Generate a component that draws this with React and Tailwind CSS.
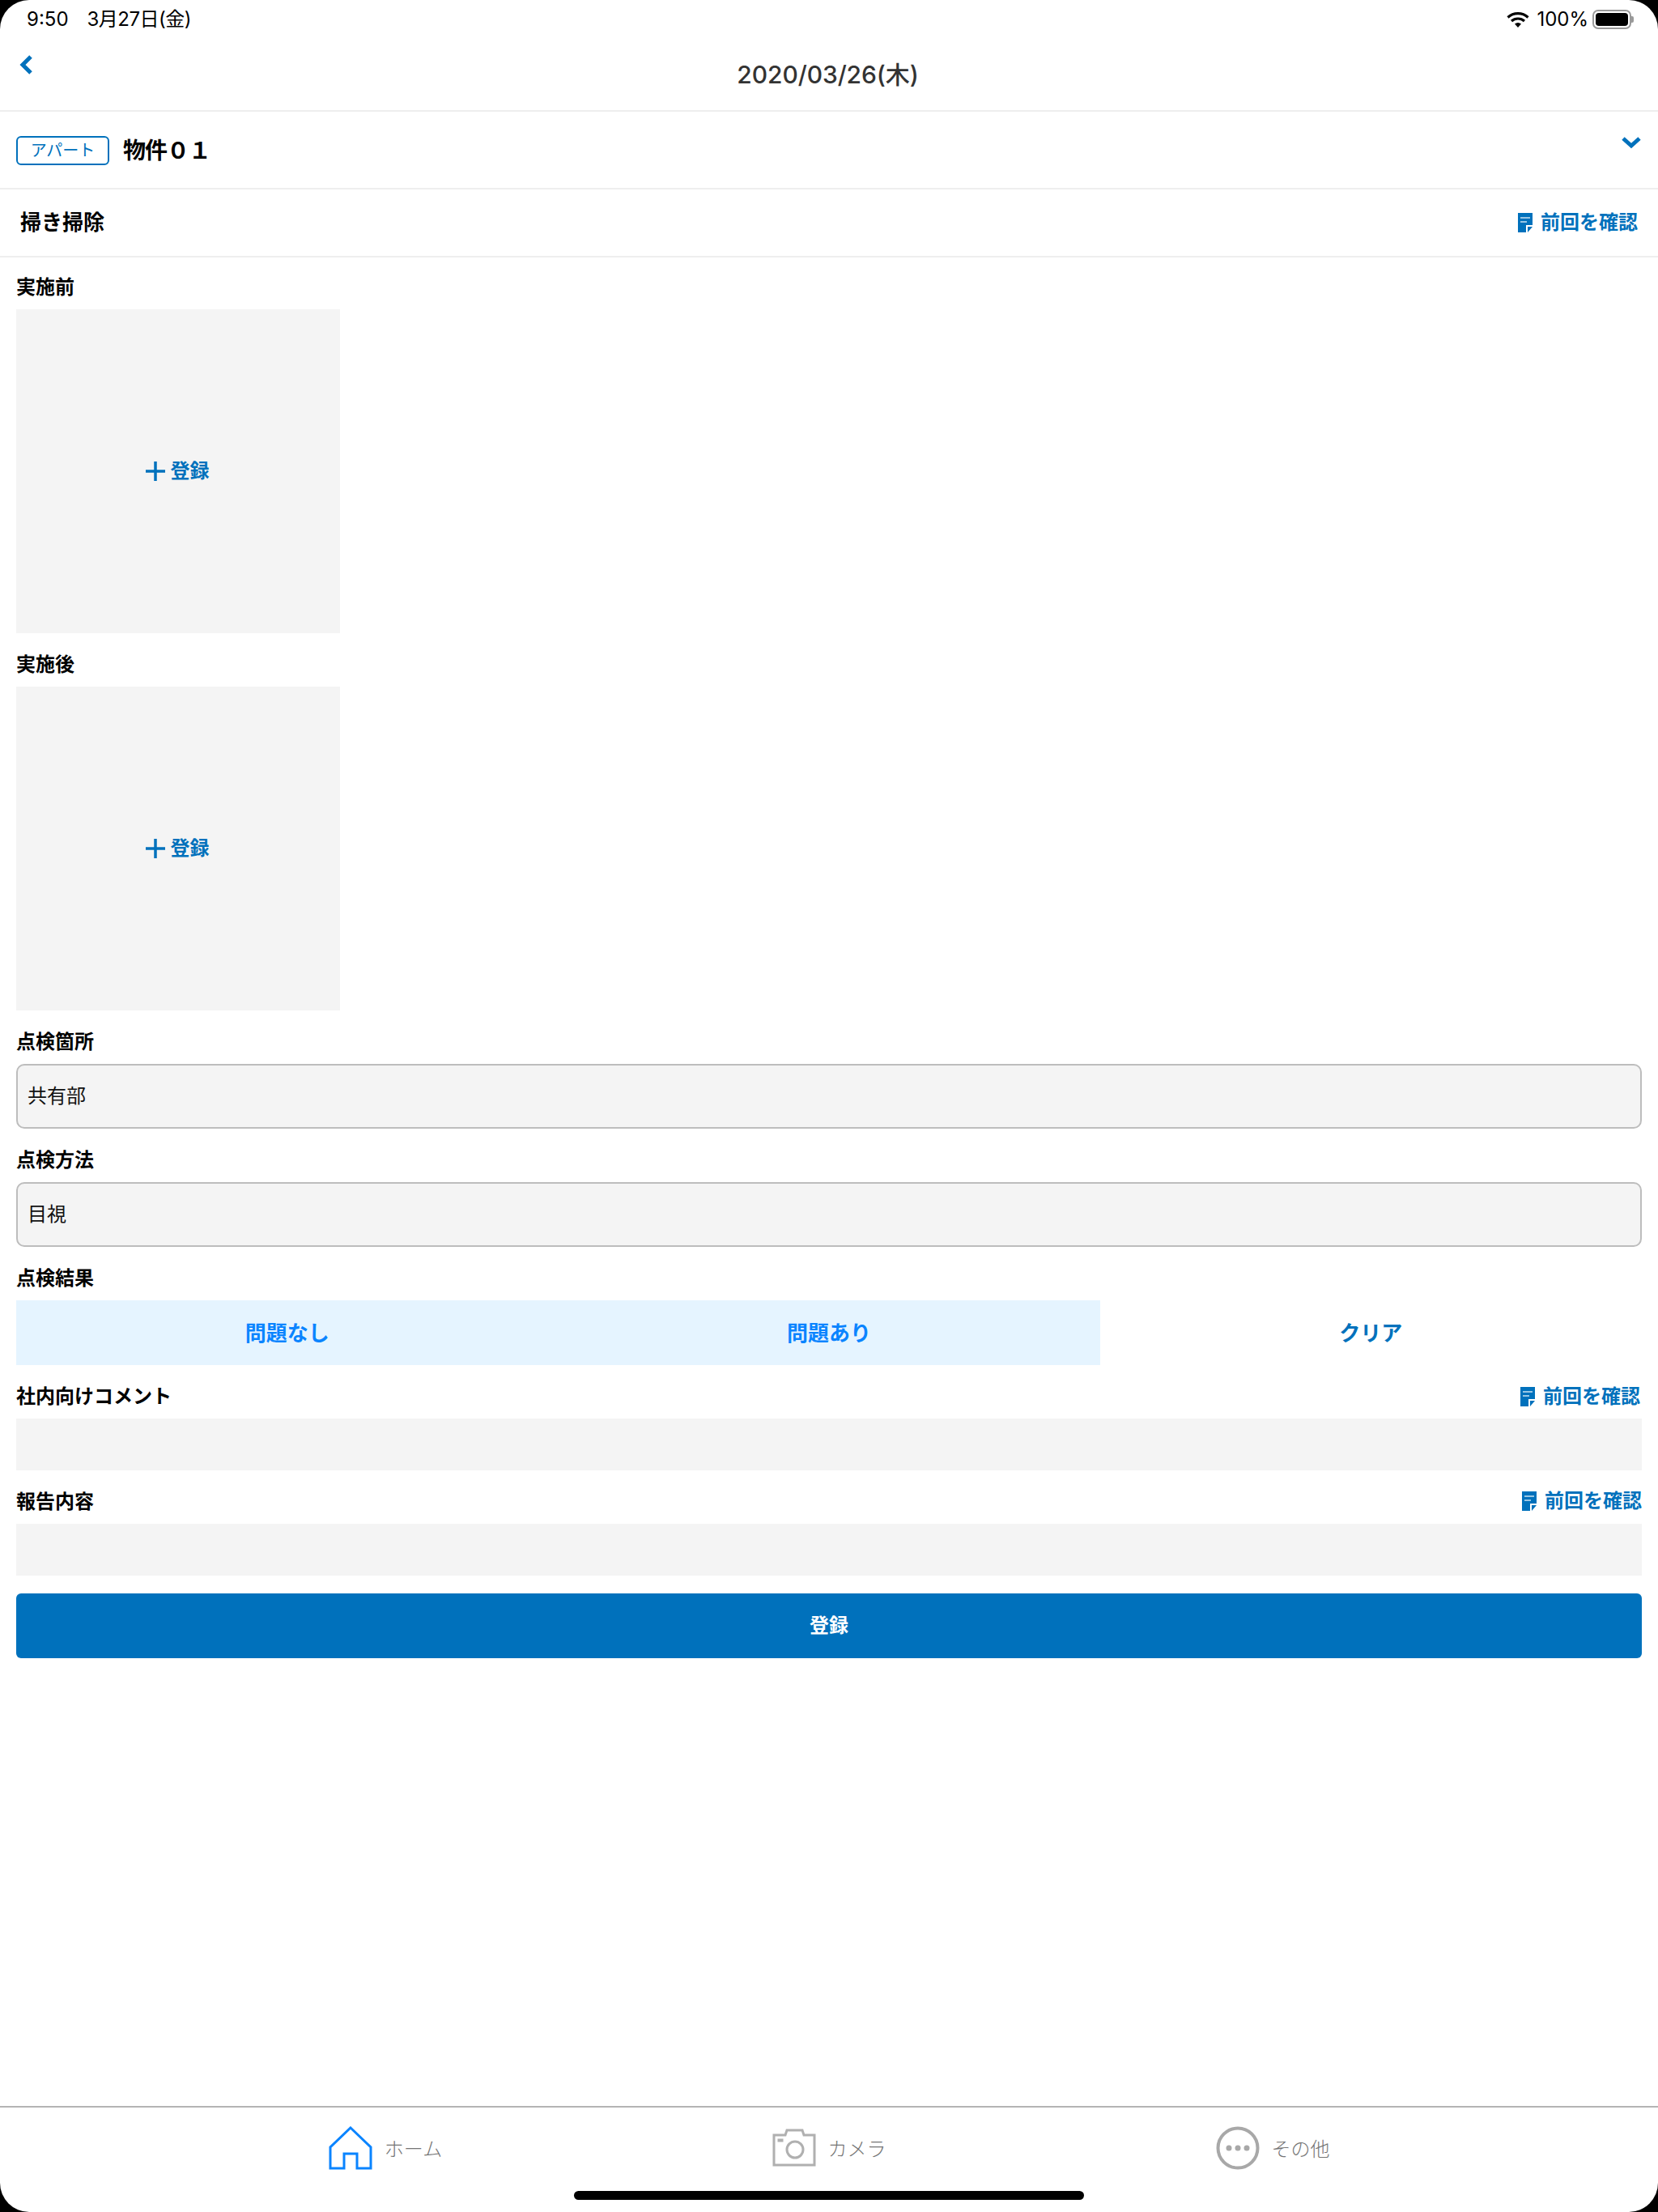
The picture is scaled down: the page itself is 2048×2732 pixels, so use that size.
import React from 'react'

const Chevron = ({ d, className }) => (
  <svg viewBox="0 0 24 24" className={className} fill="none" stroke="#0071bc" strokeWidth="5">
    <path d={d} />
  </svg>
)

const DocIcon = () => (
  <svg viewBox="0 0 18 24" className="w-[18px] h-[24px] shrink-0">
    <path d="M0 0H18V15H10V24H0Z M12 24V17H18Z" fill="#0071bc" fillRule="evenodd" />
    <path d="M3 6H15M3 11H11" stroke="#fff" strokeWidth="1.5" opacity="0.8" />
  </svg>
)

const PrevLink = ({ className = '' }) => (
  <div className={`flex items-center gap-[10px] text-[24px] leading-[28px] font-semibold text-[#0071bc] ${className}`}>
    <DocIcon />
    <span>前回を確認</span>
  </div>
)

const Field = ({ label, right, first, children }) => (
  <div className={first ? 'pt-[22px]' : 'pt-[24px]'}>
    <div className="flex justify-between items-center h-[28px] mb-[14px]">
      <span className="text-[24px] leading-[28px] pt-[1px] font-bold text-black">{label}</span>
      {right}
    </div>
    {children}
  </div>
)

const PhotoBox = () => (
  <div className="w-[400px] h-[400px] bg-[#f4f4f4] flex items-center justify-center gap-[7px] pr-[2px] text-[#0071bc]">
    <svg viewBox="0 0 24 24" className="w-[24px] h-[24px]" stroke="#0071bc" strokeWidth="3.5">
      <path d="M0 12H24M12 0V24" />
    </svg>
    <span className="text-[24px] leading-[28px] font-semibold">登録</span>
  </div>
)

const ReadOnlyInput = ({ value }) => (
  <div className="h-[80px] bg-[#f4f4f4] border-2 border-[#bdbdbd] rounded-[10px] flex items-center pl-[12px] text-[24px] text-[#111]">
    {value}
  </div>
)

const tabs = [
  {
    label: 'ホーム',
    icon: (
      <svg viewBox="0 0 54 54" className="w-[54px] h-[54px]" fill="none" stroke="#0a84ff" strokeWidth="3">
        <path d="M27 2L52 26V52H35V34H19V52H2V26Z" />
      </svg>
    ),
  },
  {
    label: 'カメラ',
    icon: (
      <svg viewBox="0 0 54 54" className="w-[54px] h-[54px]" fill="none" stroke="#b0b0b0" strokeWidth="3">
        <path d="M2 11H16L18 5H37L39 11H52V48H2Z" />
        <circle cx="28" cy="29" r="10" />
        <rect x="7" y="16" width="6" height="3" fill="#b0b0b0" strokeWidth="1" />
      </svg>
    ),
  },
  {
    label: 'その他',
    icon: (
      <svg viewBox="0 0 54 54" className="w-[54px] h-[54px]" fill="none" stroke="#a8a8a8" strokeWidth="4">
        <circle cx="27" cy="27" r="24.5" />
        <g fill="#a8a8a8" stroke="none">
          <circle cx="16" cy="27" r="3.5" />
          <circle cx="27" cy="27" r="3.5" />
          <circle cx="38" cy="27" r="3.5" />
        </g>
      </svg>
    ),
  },
]

export default function App() {
  return (
    <div className="w-[2048px] h-[2732px] bg-black font-['Inter','Noto_Sans_CJK_JP',sans-serif]">
      <div className="h-full bg-white rounded-[36px] overflow-hidden flex flex-col">
        {/* Status bar */}
        <div className="h-[48px] flex items-center justify-between pl-[33px] pr-[30px] text-[24px] text-black">
          <div className="flex items-center gap-[23px]">
            <span>9:50</span>
            <span className="tracking-[-0.5px]">3月27日(金)</span>
          </div>
          <div className="flex items-center gap-[5px]">
            <svg viewBox="0 0 28 20" className="w-[28px] h-[20px] mr-[4px]" fill="none" stroke="#000" strokeWidth="3.2">
              <path d="M1.5 7.5C8.5 1 19.5 1 26.5 7.5M6 12C10.5 8 17.5 8 22 12" />
              <path d="M10 15.5C12.5 13.5 15.5 13.5 18 15.5L14 20Z" fill="#000" stroke="none" />
            </svg>
            <span>100%</span>
            <div className="flex items-center">
              <div className="w-[48px] h-[24px] border-2 border-[#9a9a9a] rounded-[7px] p-[2px]">
                <div className="w-full h-full bg-black rounded-[4px]" />
              </div>
              <div className="w-[3px] h-[8px] bg-[#9a9a9a] rounded-r-[2px]" />
            </div>
          </div>
        </div>

        {/* Nav */}
        <div className="relative h-[90px] border-b-2 border-[#eeeeee] flex items-center justify-center pr-[3px]">
          <Chevron d="M17 2L7 12L17 22" className="absolute left-[21px] top-[19px] w-[24px] h-[26px]" />
          <span className="text-[30px] leading-[36px] font-medium tracking-[-0.1px] text-[#333]">2020/03/26(木)</span>
        </div>

        {/* Property row */}
        <div className="h-[96px] border-b-2 border-[#eeeeee] flex items-center justify-between pl-[20px] pr-[20px] pt-[2px]">
          <div className="flex items-center gap-[17px]">
            <div className="w-[115px] h-[36px] border-2 border-[#0071bc] rounded-[6px] flex items-center justify-center text-[20px] text-[#0071bc]">
              アパート
            </div>
            <span className="text-[28px] leading-[36px] font-semibold tracking-[-1px] text-black">物件０１</span>
          </div>
          <Chevron d="M2 5L12 14L22 5" className="w-[26px] h-[24px] -mt-[16px]" />
        </div>

        {/* Task row */}
        <div className="h-[84px] border-b-2 border-[#eeeeee] flex items-center justify-between pl-[25px] pr-[25px]">
          <span className="text-[26px] leading-[36px] font-semibold text-black">掃き掃除</span>
          <PrevLink />
        </div>

        {/* Form */}
        <div className="px-[20px]">
          <Field label="実施前" first>
            <PhotoBox />
          </Field>
          <Field label="実施後">
            <PhotoBox />
          </Field>
          <Field label="点検箇所">
            <ReadOnlyInput value="共有部" />
          </Field>
          <Field label="点検方法">
            <ReadOnlyInput value="目視" />
          </Field>
          <Field label="点検結果">
            <div className="grid grid-cols-3 h-[80px] text-[26px] font-semibold">
              <div className="bg-[#e5f4ff] text-[#0a84ff] flex items-center justify-center">問題なし</div>
              <div className="bg-[#e5f4ff] text-[#0a84ff] flex items-center justify-center">問題あり</div>
              <div className="text-[#0071bc] flex items-center justify-center">クリア</div>
            </div>
          </Field>
          <Field label="社内向けコメント" right={<PrevLink className="mr-[2px] pt-[1px]" />}>
            <div className="h-[64px] bg-[#f4f4f4]" />
          </Field>
          <Field label="報告内容" right={<PrevLink />}>
            <div className="h-[64px] bg-[#f4f4f4]" />
          </Field>
          <button className="w-full h-[80px] mt-[22px] bg-[#0071bc] rounded-[6px] text-white text-[24px] font-semibold">
            登録
          </button>
        </div>

        {/* Tab bar */}
        <div className="mt-auto border-t-2 border-[#b4b4b4]">
          <div className="grid grid-cols-3 h-[100px] px-[202px]">
            {tabs.map((tab) => (
              <div key={tab.label} className="flex items-center justify-center gap-[15px]">
                {tab.icon}
                <span className="text-[24px] pt-[3px] font-light text-[#757575]">{tab.label}</span>
              </div>
            ))}
          </div>
          <div className="w-[630px] h-[11px] mx-auto mt-[3px] mb-[15px] bg-black rounded-full" />
        </div>
      </div>
    </div>
  )
}
